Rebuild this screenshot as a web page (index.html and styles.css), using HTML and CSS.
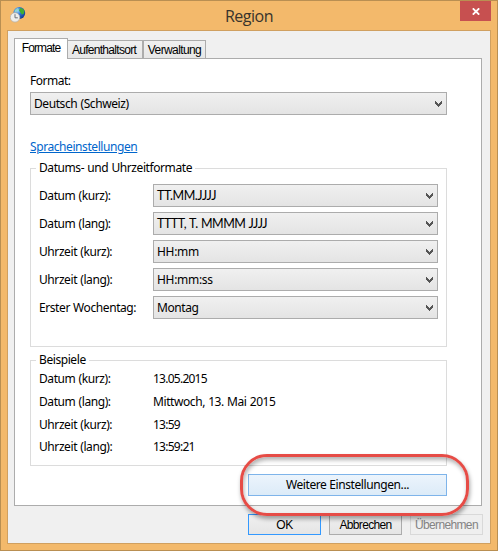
FILE: index.html
```html
<!DOCTYPE html>
<html lang="de">
<head>
  <meta charset="UTF-8" />
  <title>Region</title>
  <link rel="stylesheet" href="styles.css">
</head>
<body>

  <svg width="0" height="0" class="defs">
    <symbol id="arrow" viewBox="0 0 7 6">
      <path d="M0 0h1v1h1v1h1v1h1v-1h1v-1h1v-1h1v3h-1v1h-1v1h-1v1h-1v-1h-1v-1h-1v-1h-1z" />
    </symbol>
  </svg>

  <div class="window">
    <div class="titlebar">
      <svg class="app-icon" width="16" height="16" viewBox="0 0 16 16">
        <defs>
          <radialGradient id="globe" cx="35%" cy="30%" r="75%">
            <stop offset="0" stop-color="#9fdcf8" />
            <stop offset=".45" stop-color="#2f74d6" />
            <stop offset="1" stop-color="#123a94" />
          </radialGradient>
        </defs>
        <circle cx="9.3" cy="6" r="5.9" fill="url(#globe)" />
        <path d="M10 1l3 .8 1.4 2.2-.6 3-2 .6-1.4-2.2-1.4-2z" fill="#3fae35" />
        <path d="M4.6 3.4l3-2.4 1 1.6-2 2-2 1z" fill="#8ed6d0" />
        <circle cx="5" cy="10.4" r="4.7" fill="#eeeeec" stroke="#b9b4ac" stroke-width=".8" />
        <path d="M5 7.2v3.6h2.8" fill="none" stroke="#6b7078" />
      </svg>
      <h1>Region</h1>
      <button class="close">
        <svg width="8" height="7" viewBox="0 0 8 7"><path d="M.8 .3L7.2 6.7M7.2 .3L.8 6.7" stroke="#fff" stroke-width="1.8" /></svg>
      </button>
    </div>

    <div class="client">
      <div class="tabs">
        <div class="tab active"><span>Formate</span></div>
        <div class="tab second"><span>Aufenthaltsort</span></div>
        <div class="tab third"><span>Verwaltung</span></div>
      </div>

      <div class="pane">
        <div class="label">Format:</div>
        <div class="combo"><span>Deutsch (Schweiz)</span><svg><use href="#arrow" /></svg></div>
        <a class="link">Spracheinstellungen</a>

        <div class="group formats">
          <div class="legend"><span>Datums- und Uhrzeitformate</span></div>
          <div class="row"><span class="name">Datum (kurz):</span><div class="combo"><span class="pattern">TT.MM.JJJJ</span><svg><use href="#arrow" /></svg></div></div>
          <div class="row"><span class="name">Datum (lang):</span><div class="combo"><span class="pattern">TTTT, T. MMMM JJJJ</span><svg><use href="#arrow" /></svg></div></div>
          <div class="row"><span class="name">Uhrzeit (kurz):</span><div class="combo"><span class="time">HH:mm</span><svg><use href="#arrow" /></svg></div></div>
          <div class="row"><span class="name">Uhrzeit (lang):</span><div class="combo"><span class="time">HH:mm:ss</span><svg><use href="#arrow" /></svg></div></div>
          <div class="row"><span class="name">Erster Wochentag:</span><div class="combo"><span>Montag</span><svg><use href="#arrow" /></svg></div></div>
        </div>

        <div class="group examples">
          <div class="legend"><span>Beispiele</span></div>
          <div class="row"><span class="name">Datum (kurz):</span><span class="digits">13.05.2015</span></div>
          <div class="row"><span class="name">Datum (lang):</span><span>Mittwoch, 13. Mai 2015</span></div>
          <div class="row"><span class="name">Uhrzeit (kurz):</span><span class="digits">13:59</span></div>
          <div class="row"><span class="name">Uhrzeit (lang):</span><span class="digits">13:59:21</span></div>
        </div>

        <div class="more">
          <button class="btn hot">Weitere Einstellungen...</button>
          <div class="marker"></div>
        </div>
      </div>

      <div class="footer">
        <button class="btn default"><span>OK</span></button>
        <button class="btn"><span>Abbrechen</span></button>
        <button class="btn disabled"><span>Übernehmen</span></button>
      </div>
    </div>
  </div>

</body>
</html>
```

FILE: styles.css
```css
:root {
  --frame: #f3b96b;
  --frame-line: #b98f52;
  --face: #f0f0f0;
  --line: #acacac;
}
* {
  margin: 0;
  padding: 0;
  box-sizing: border-box;
}
body {
  width: 498px;
  height: 551px;
  overflow: hidden;
  font: 12px/16px "Noto Sans", sans-serif;
  letter-spacing: -0.42px;
  word-spacing: 0.5px;
  color: #000;
}
.defs {
  display: block;
  position: absolute;
}
.window {
  width: 498px;
  height: 551px;
  background: var(--frame);
  border: 1px solid var(--frame-line);
  padding: 0 6px;
}
.titlebar {
  height: 29px;
  display: grid;
  grid-template-columns: 31px 1fr 31px;
}
.app-icon {
  margin: 6px 0 0 3px;
}
h1 {
  font: 16px/30px "Open Sans", sans-serif;
  letter-spacing: -0.5px;
  text-align: center;
  color: #38332c;
}
.close {
  height: 20px;
  border: 0;
  background: #c75050;
  display: flex;
  align-items: center;
  justify-content: center;
}
.client {
  height: 514px;
  background: var(--face);
  border: 1px solid #d0a060;
  padding: 7px 6px 0;
}
.tabs {
  height: 20px;
  display: flex;
  align-items: flex-end;
  font: 12px/16px "Liberation Sans", sans-serif;
  letter-spacing: -0.7px;
}
.tab {
  height: 18px;
  border: 1px solid var(--line);
  border-bottom: 0;
  background: linear-gradient(#f0f0f0, #e7e7e7);
  text-align: center;
  line-height: 19px;
  white-space: nowrap;
}
.tab.active {
  width: 54px;
  height: 21px;
  margin-bottom: -1px;
  background: #fff;
  letter-spacing: -0.9px;
  z-index: 1;
}
.second {
  width: 75px;
  border-left: 0;
  padding-right: 2px;
}
.third {
  width: 63px;
  letter-spacing: -0.6px;
}
.pane {
  width: 468px;
  height: 448px;
  border: 1px solid var(--line);
  background: #fff;
  padding: 14px 34px 0 15px;
}
.label {
  height: 19px;
  letter-spacing: -0.5px;
}
.combo {
  height: 23px;
  flex: 1;
  border: 1px solid var(--line);
  background: linear-gradient(#f0f0f0, #e4e4e4);
  display: flex;
  align-items: center;
  justify-content: space-between;
  padding: 0 4px 0 3px;
}
.combo svg {
  width: 7px;
  height: 6px;
  fill: #555;
}
.pattern {
  font-family: Lato, sans-serif;
  font-size: 12.5px;
  letter-spacing: -0.45px;
}
.time {
  letter-spacing: -0.3px;
}
.link {
  display: block;
  height: 16px;
  margin-top: 24px;
  color: #0066cc;
  text-decoration: underline;
}
.group {
  border: 1px solid #dcdcdc;
  padding-left: 8px;
}
.legend {
  height: 16px;
  margin-top: -9px;
}
.legend span {
  background: #fff;
  display: inline-block;
  margin-left: -3px;
  padding: 0 3px;
}
.row {
  display: flex;
  align-items: center;
}
.name {
  width: 114px;
}
.formats {
  height: 179px;
  margin-top: 13px;
  padding-right: 8px;
}
.formats .legend {
  margin-bottom: 8px;
}
.formats .row {
  margin-bottom: 5px;
}
.examples {
  height: 106px;
  margin-top: 13px;
}
.examples .row {
  height: 22.7px;
}
.digits {
  letter-spacing: -0.75px;
}
.more {
  position: relative;
  width: 199px;
  margin: 8px 0 0 218px;
}
.btn {
  display: block;
  width: 73px;
  height: 21px;
  border: 1px solid var(--line);
  background: linear-gradient(#f0f0f0, #e5e5e5);
  font: 12px/18px "Liberation Sans", sans-serif;
  letter-spacing: -0.65px;
  color: #000;
}
.btn.hot {
  width: 199px;
  height: 22px;
  border-color: #7eb4ea;
  background: linear-gradient(#ecf4fc, #dcebf8);
  font-family: "Noto Sans", sans-serif;
  letter-spacing: -0.4px;
}
.marker {
  position: absolute;
  left: -8px;
  top: -20px;
  width: 229px;
  height: 62px;
  border: 3px solid #e64c46;
  border-radius: 27px;
  box-shadow: 1px 3px 4px rgba(0, 0, 0, 0.35), inset 1px 3px 4px rgba(0, 0, 0, 0.3);
}
.footer {
  display: flex;
  gap: 8px;
  padding: 8px 0 0 234px;
}
.btn.default {
  border-color: #3399ff;
  letter-spacing: -0.3px;
}
.disabled {
  border-color: #d9d9d9;
  background: #efefef;
  color: #838383;
}
```
